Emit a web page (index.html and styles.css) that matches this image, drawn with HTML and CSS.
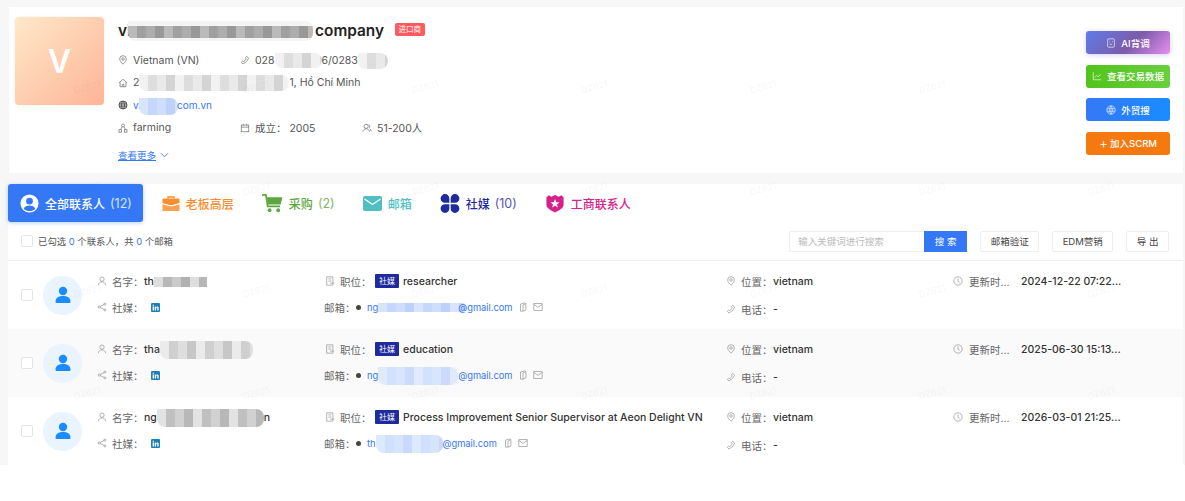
FILE: index.html
```html
<!DOCTYPE html>
<html lang="zh">
<head>
    <meta charset="UTF-8" />
    <meta name="viewport" content="width=device-width, initial-scale=1" />
    <title>公司详情</title>
    <link rel="stylesheet" href="styles.css">
</head>
<body>
    <svg class="sprite" xmlns="http://www.w3.org/2000/svg">
        <symbol id="i-pin" viewBox="0 0 12 12"><path d="M6 11C4 9 2 7 2 4.800A4 4 0 0 1 10 4.800C10 7 8 9 6 11Z"/><circle cx="6" cy="4.800" r="1.500"/></symbol>
        <symbol id="i-phone" viewBox="0 0 12 12"><path d="M8 1.500 10.500 4 9.500 5C8.500 7.500 7 9 4.500 10L3.500 10.800 1.500 8.800 3.200 7.300 4.500 7.800C5.800 7 6.800 6 7.300 4.700L6.700 3Z"/></symbol>
        <symbol id="i-home" viewBox="0 0 12 12"><path d="M1 6 6 1.500 11 6M2.500 5V10.500H9.500V5M5 10.500V7.500H7V10.500"/></symbol>
        <symbol id="i-globe" viewBox="0 0 12 12"><circle cx="6" cy="6" r="4.800"/><path d="M1.200 6H10.800M1.800 3.800H10.200M1.800 8.200H10.200M6 1.200C3.500 4 3.500 8 6 10.800M6 1.200C8.500 4 8.500 8 6 10.800"/></symbol>
        <symbol id="i-org" viewBox="0 0 12 12"><circle cx="6" cy="3" r="1.800"/><rect x="1.200" y="8" width="3" height="3"/><rect x="7.800" y="8" width="3" height="3"/><path d="M4.800 4.500 3 8M7.200 4.500 9 8"/></symbol>
        <symbol id="i-cal" viewBox="0 0 12 12"><rect x="1.500" y="2.500" width="9" height="8"/><path d="M1.500 5H10.500M4 1V3M8 1V3"/></symbol>
        <symbol id="i-users" viewBox="0 0 12 12"><circle cx="5" cy="4" r="2.500"/><path d="M1 10.500C1.500 8 3 7 5 7S8.500 8 9 10.500M8 1.800C9.500 2.500 9.700 5 8.500 6M9.500 7C10.500 7.700 11 8.700 11 10"/></symbol>
        <symbol id="i-user" viewBox="0 0 12 12"><circle cx="6" cy="3.800" r="2.600"/><path d="M1.500 11C2 8.300 3.800 7 6 7S10 8.300 10.500 11"/></symbol>
        <symbol id="i-share" viewBox="0 0 12 12"><circle cx="2.800" cy="6" r="1.400"/><circle cx="9.500" cy="2.500" r="1.200"/><circle cx="9.500" cy="9.500" r="1.200"/><path d="M4 5.300 8.400 3.100M4 6.700 8.400 8.900"/></symbol>
        <symbol id="i-job" viewBox="0 0 12 12"><path d="M2 1H9.500V11H2ZM4 3.500H7.500M4 6H7.500M6 8.500H11"/></symbol>
        <symbol id="i-clock" viewBox="0 0 12 12"><circle cx="6" cy="6" r="5"/><path d="M6 3V6.300L8 7.500"/></symbol>
        <symbol id="i-copy" viewBox="0 0 12 12"><path d="M3 2.500 8 1.200 9.500 2V9.500L6 11H3ZM6 11V3.500L9.500 2"/></symbol>
        <symbol id="i-mail" viewBox="0 0 12 12"><rect x="1" y="2" width="10" height="8"/><path d="M1 2.800 6 6.500 11 2.800"/></symbol>
        <symbol id="i-in" viewBox="0 0 12 12"><rect class="fill-in" width="12" height="12" rx="1.500"/><path class="fill-white" d="M2.200 4.700H4V10H2.200ZM2.200 2.200H4V3.800H2.200ZM5 4.700H6.700V5.400C7.200 4.700 8 4.500 8.700 4.600 9.700 4.800 10.200 5.500 10.200 6.700V10H8.400V7.200C8.400 6.400 8.100 6 7.600 6 7.100 6 6.800 6.400 6.800 7.200V10H5Z"/></symbol>
        <symbol id="i-person" viewBox="0 0 18 18"><circle cx="9" cy="5" r="4.200"/><path d="M1.500 15.500C1.500 11.500 5 10 9 10S16.500 11.500 16.500 15.500C16.500 16.500 16 17 15 17H3C2 17 1.500 16.500 1.500 15.500Z"/></symbol>
    </svg>

    <div class="page">
        <section class="company">
            <div class="logo">V</div>
            <div class="info">
                <div class="title-line">
                    <h1 class="title">vi<span class="mosaic mosaic-title"></span>company</h1>
                    <span class="tag-import">进口商</span>
                </div>
                <div class="info-row">
                    <span class="info-item wide"><svg class="ico"><use href="#i-pin"/></svg>Vietnam (VN)</span>
                    <span class="info-item"><svg class="ico"><use href="#i-phone"/></svg><span>028<span class="mosaic mosaic-phone"></span>6/0283<span class="mosaic mosaic-phone2"></span></span></span>
                </div>
                <div class="info-row">
                    <span class="info-item"><svg class="ico"><use href="#i-home"/></svg><span>2<span class="mosaic mosaic-addr"></span>1, Hồ Chí Minh</span></span>
                </div>
                <div class="info-row">
                    <span class="info-item"><svg class="ico ico-dark"><use href="#i-globe"/></svg><a class="site" href="#">vi<span class="mosaic mosaic-blue mosaic-site"></span>com.vn</a></span>
                </div>
                <div class="info-row">
                    <span class="info-item wide"><svg class="ico"><use href="#i-org"/></svg>farming</span>
                    <span class="info-item mid"><svg class="ico"><use href="#i-cal"/></svg>成立：&nbsp;2005</span>
                    <span class="info-item"><svg class="ico"><use href="#i-users"/></svg>51-200人</span>
                </div>
                <a class="more" href="#"><span>查看更多</span><svg class="chev" viewBox="0 0 10 6"><path d="M1 1 5 5 9 1"/></svg></a>
            </div>
            <div class="actions">
                <button class="action action-ai"><svg class="action-ico" viewBox="0 0 12 12"><rect x="2" y="1" width="8" height="10" rx="1"/><path d="M4 4.500H5M7 4.500H8M4.500 7.500H7.500"/></svg>AI背调</button>
                <button class="action action-data"><svg class="action-ico" viewBox="0 0 12 12"><path d="M1.500 1.500V10.500H11M3 8 5.500 5.500 7.500 7 10.500 4"/></svg>查看交易数据</button>
                <button class="action action-search"><svg class="action-ico" viewBox="0 0 12 12"><circle cx="6" cy="6" r="5"/><path d="M1.500 4.500H10.500M1.500 7.500H10.500M6 1C4 4 4 8 6 11M6 1C8 4 8 8 6 11"/></svg>外贸搜</button>
                <button class="action action-scrm"><span class="plus">+</span>加入SCRM</button>
            </div>
        </section>

        <section class="panel">
            <nav class="tabs">
                <a class="tab tab-active" href="#">
                    <svg class="tab-ico" viewBox="0 0 20 20"><circle cx="10" cy="10" r="9.500" fill="#fff"/><circle cx="10" cy="7.500" r="3.500" fill="#3578f6"/><path d="M3.800 15.500C5 12.800 7.300 12 10 12S15 12.800 16.200 15.500C14.500 17.300 12.400 18 10 18S5.500 17.300 3.800 15.500Z" fill="#3578f6"/></svg>
                    全部联系人 <span class="count">(12)</span>
                </a>
                <a class="tab tab-boss" href="#">
                    <svg class="tab-ico tab-ico-boss" viewBox="0 0 18 18"><path d="M6 4V2.500H12V4" fill="none" stroke="#f98d30" stroke-width="1.500"/><path d="M1.500 4H16.500Q17.500 4 17.500 5V8.500L10.500 10.500H7.500L.5 8.500V5Q.5 4 1.500 4Z" fill="#f98d30"/><path d="M.5 9.800 7.500 11.700H10.500L17.500 9.800V15.500Q17.500 16.500 16.500 16.500H1.500Q.5 16.500 .5 15.500Z" fill="#fba04f"/></svg>
                    老板高层
                </a>
                <a class="tab tab-buy" href="#">
                    <svg class="tab-ico tab-ico-cart" viewBox="0 0 22 20"><path d="M0 1H4L6 13H19" fill="none" stroke="#5ea63f" stroke-width="1.800"/><path d="M5 3.500H21.500L19.500 11H6.200Z" fill="#5ea63f"/><circle cx="8" cy="17" r="2" fill="#5ea63f"/><circle cx="17" cy="17" r="2" fill="#5ea63f"/></svg>
                    采购 <span class="count">(2)</span>
                </a>
                <a class="tab tab-mail" href="#">
                    <svg class="tab-ico" viewBox="0 0 19 15"><rect width="19" height="15" rx="2" fill="#4fbfc4"/><path d="M1.500 3 9.500 8.500 17.500 3" fill="none" stroke="#fff" stroke-width="1.300"/></svg>
                    邮箱
                </a>
                <a class="tab tab-social" href="#">
                    <svg class="tab-ico tab-ico-wide" viewBox="0 0 20 20"><g fill="#1f2b9c"><path d="M9.300 9.300H5A4.600 4.600 0 1 1 9.300 5Z"/><path d="M10.700 9.300H15A4.600 4.600 0 1 0 10.700 5Z"/><path d="M9.300 10.700H5A4.600 4.600 0 1 0 9.300 15Z"/><path d="M10.700 10.700H15A4.600 4.600 0 1 1 10.700 15Z"/></g></svg>
                    社媒 <span class="count">(10)</span>
                </a>
                <a class="tab tab-biz" href="#">
                    <svg class="tab-ico tab-ico-wide" viewBox="0 0 20 21"><path d="M3 1.500 6 3 10 1 14 3 17 1.500 19.500 4V12C19.500 16 14 18.500 10 20.500 6 18.500.5 16 .5 12V4Z" fill="#d6208a"/><path d="M10 5.500 11.400 9 15 9.200 12.200 11.500 13.200 15 10 13 6.800 15 7.800 11.500 5 9.200 8.600 9Z" fill="#fff"/></svg>
                    工商联系人
                </a>
            </nav>

            <div class="toolbar">
                <label class="check-all"><span class="checkbox"></span><span>已勾选 <em>0</em> 个联系人，共 <em>0</em> 个邮箱</span></label>
                <div class="tools">
                    <div class="search">
                        <input type="text" placeholder="输入关键词进行搜索">
                        <button class="search-btn">搜 索</button>
                    </div>
                    <button class="tool-btn">邮箱验证</button>
                    <button class="tool-btn">EDM营销</button>
                    <button class="tool-btn">导 出</button>
                </div>
            </div>

            <div class="contact">
                <span class="checkbox"></span>
                <span class="avatar"><svg><use href="#i-person"/></svg></span>
                <div class="col col-name">
                    <div class="line"><svg class="ico"><use href="#i-user"/></svg><span class="label">名字：</span><span class="value">th<span class="mosaic mosaic-name1"></span></span></div>
                    <div class="line"><svg class="ico"><use href="#i-share"/></svg><span class="label">社媒：</span><svg class="linkedin"><use href="#i-in"/></svg></div>
                </div>
                <div class="col col-job">
                    <div class="line"><svg class="ico"><use href="#i-job"/></svg><span class="label">职位：</span><span class="badge">社媒</span><span class="value">researcher</span></div>
                    <div class="line"><span class="label label-mail">邮箱：</span><span class="dot"></span><a class="mail" href="#">ng<span class="mosaic mosaic-blue mosaic-mail1"></span>@gmail.com</a><svg class="ico ico-copy"><use href="#i-copy"/></svg><svg class="ico"><use href="#i-mail"/></svg></div>
                </div>
                <div class="col">
                    <div class="line"><svg class="ico"><use href="#i-pin"/></svg><span class="label">位置：</span><span class="value">vietnam</span></div>
                    <div class="line"><svg class="ico"><use href="#i-phone"/></svg><span class="label">电话：</span><span class="value">-</span></div>
                </div>
                <div class="col">
                    <div class="line"><svg class="ico"><use href="#i-clock"/></svg><span class="label label-time">更新时...</span><span class="value value-time">2024-12-22 07:22...</span></div>
                </div>
            </div>

            <div class="contact contact-alt">
                <span class="checkbox"></span>
                <span class="avatar"><svg><use href="#i-person"/></svg></span>
                <div class="col col-name">
                    <div class="line"><svg class="ico"><use href="#i-user"/></svg><span class="label">名字：</span><span class="value">tha<span class="mosaic mosaic-name2"></span></span></div>
                    <div class="line"><svg class="ico"><use href="#i-share"/></svg><span class="label">社媒：</span><svg class="linkedin"><use href="#i-in"/></svg></div>
                </div>
                <div class="col col-job">
                    <div class="line"><svg class="ico"><use href="#i-job"/></svg><span class="label">职位：</span><span class="badge">社媒</span><span class="value">education</span></div>
                    <div class="line"><span class="label label-mail">邮箱：</span><span class="dot"></span><a class="mail" href="#">ng<span class="mosaic mosaic-blue mosaic-mail2"></span>@gmail.com</a><svg class="ico ico-copy"><use href="#i-copy"/></svg><svg class="ico"><use href="#i-mail"/></svg></div>
                </div>
                <div class="col">
                    <div class="line"><svg class="ico"><use href="#i-pin"/></svg><span class="label">位置：</span><span class="value">vietnam</span></div>
                    <div class="line"><svg class="ico"><use href="#i-phone"/></svg><span class="label">电话：</span><span class="value">-</span></div>
                </div>
                <div class="col">
                    <div class="line"><svg class="ico"><use href="#i-clock"/></svg><span class="label label-time">更新时...</span><span class="value value-time">2025-06-30 15:13...</span></div>
                </div>
            </div>

            <div class="contact">
                <span class="checkbox"></span>
                <span class="avatar"><svg><use href="#i-person"/></svg></span>
                <div class="col col-name">
                    <div class="line"><svg class="ico"><use href="#i-user"/></svg><span class="label">名字：</span><span class="value">ng<span class="mosaic mosaic-name3"></span>n</span></div>
                    <div class="line"><svg class="ico"><use href="#i-share"/></svg><span class="label">社媒：</span><svg class="linkedin"><use href="#i-in"/></svg></div>
                </div>
                <div class="col col-job">
                    <div class="line"><svg class="ico"><use href="#i-job"/></svg><span class="label">职位：</span><span class="badge">社媒</span><span class="value">Process Improvement Senior Supervisor at Aeon Delight VN</span></div>
                    <div class="line"><span class="label label-mail">邮箱：</span><span class="dot"></span><a class="mail" href="#">th<span class="mosaic mosaic-blue mosaic-mail3"></span>@gmail.com</a><svg class="ico ico-copy"><use href="#i-copy"/></svg><svg class="ico"><use href="#i-mail"/></svg></div>
                </div>
                <div class="col">
                    <div class="line"><svg class="ico"><use href="#i-pin"/></svg><span class="label">位置：</span><span class="value">vietnam</span></div>
                    <div class="line"><svg class="ico"><use href="#i-phone"/></svg><span class="label">电话：</span><span class="value">-</span></div>
                </div>
                <div class="col">
                    <div class="line"><svg class="ico"><use href="#i-clock"/></svg><span class="label label-time">更新时...</span><span class="value value-time">2026-03-01 21:25...</span></div>
                </div>
            </div>
        </section>

        <svg class="watermark" xmlns="http://www.w3.org/2000/svg">
            <defs>
                <pattern id="wm" x="4" y="39" width="169" height="102" patternUnits="userSpaceOnUse">
                    <text x="84" y="51" text-anchor="middle" transform="rotate(-15 84 51)">DZ621</text>
                </pattern>
            </defs>
            <rect width="100%" height="100%" fill="url(#wm)"/>
        </svg>
    </div>
</body>
</html>
```

FILE: styles.css
```css
* {
    box-sizing: border-box;
}
body {
    margin: 0;
    background: white;
    font-family: Inter, "Noto Sans CJK SC", sans-serif;
    font-size: 10.5px;
    color: #333;
}
a {
    text-decoration: none;
}
.sprite {
    display: none;
}
.page {
    position: relative;
    height: 465px;
    padding: 7px 2px 0 8px;
    background: #f7f7f7;
    overflow: hidden;
}
.watermark {
    position: absolute;
    left: 0;
    top: 0;
    width: 100%;
    height: 100%;
    pointer-events: none;
}
.watermark text {
    font-size: 9px;
    fill: rgba(0, 0, 0, 0.03);
}

/* icons */
.ico {
    width: 10px;
    height: 10px;
    flex: none;
    fill: none;
    stroke: #777;
    stroke-width: 0.9;
}
.ico-dark {
    stroke: #555;
    stroke-width: 1.2;
}

/* blurred parts of the screenshot */
.mosaic {
    display: inline-block;
    vertical-align: middle;
    margin: -6px 0;
    height: 16px;
    background-color: #e4e4e4;
    background-image: repeating-linear-gradient(90deg, rgba(255,255,255,0.5) 0 9px, rgba(0,0,0,0.03) 9px 18px, rgba(255,255,255,0.2) 18px 27px, rgba(0,0,0,0.07) 27px 36px);
    border-radius: 0 8px 8px 8px;
}
.mosaic-blue {
    background-color: #c5d8fb;
    background-image: repeating-linear-gradient(90deg, rgba(255,255,255,0.3) 0 9px, rgba(0,0,0,0) 9px 18px, rgba(255,255,255,0.15) 18px 27px, rgba(0,0,255,0.03) 27px 36px);
}
.mosaic-title {
    width: 185px;
    height: 20px;
    margin: -6px 2px -6px -3px;
    background-color: #a9a9a9;
    background-image: linear-gradient(#f4f4f4 0 25%, transparent 25% 85%, #f4f4f4 85%), repeating-linear-gradient(90deg, rgba(255,255,255,0.2) 0 9px, rgba(0,0,0,0.05) 9px 18px, rgba(255,255,255,0.05) 18px 27px, rgba(0,0,0,0.1) 27px 36px);
}
.mosaic-phone { width: 47px; height: 15px; }
.mosaic-phone2 { width: 30px; height: 16px; }
.mosaic-addr { width: 150px; height: 16px; }
.mosaic-site { width: 39px; height: 17px; margin-left: -2px; margin-right: -1px; }
.mosaic-name1 { width: 53px; height: 10px; background-color: #bdbdbd; border-radius: 0; }
.mosaic-name2 { width: 93px; height: 18px; background-color: #d6d6d6; }
.mosaic-name3 { width: 107px; height: 18px; background-color: #c6c6c6; }
.mosaic-mail1 { width: 88px; height: 9px; margin-right: -8px; border-radius: 0 4px 4px 0; }
.mosaic-mail2 { width: 80px; height: 18px; background-color: #d2e1fc; }
.mosaic-mail3 { width: 67px; height: 18px; background-color: #cfdffc; }

/* company card */
.company {
    display: flex;
    height: 166px;
    margin-left: 1px;
    padding: 10px 13px 0 6px;
    background: white;
}
.logo {
    width: 89px;
    height: 88px;
    margin-right: 14px;
    flex: none;
    display: flex;
    align-items: center;
    justify-content: center;
    border-radius: 4px;
    background: linear-gradient(135deg, #ffe8c9, #fdb497);
    box-shadow: 0 0 3px rgba(0, 0, 0, 0.08);
    color: white;
    font-size: 32px;
    font-weight: 600;
}
.info {
    flex: 1;
}
.title-line {
    display: flex;
    align-items: center;
    height: 26px;
    margin-bottom: 6px;
}
.title {
    margin: 0;
    font-size: 15.4px;
    font-weight: 600;
    color: #222;
}
.tag-import {
    margin: -2px 0 0 11px;
    padding: 0 3.5px;
    height: 13px;
    line-height: 13px;
    border-radius: 2px;
    background: #ff5a5f;
    color: white;
    font-size: 7.5px;
}
.info-row {
    display: flex;
    height: 22.5px;
    align-items: center;
    color: #555;
}
.info-item {
    display: flex;
    align-items: center;
    gap: 5px;
    white-space: nowrap;
}
.wide {
    width: 122px;
}
.mid {
    width: 122px;
}
.site,
.more {
    color: #3578f6;
}
.site {
    font-size: 10px;
}
.more {
    display: flex;
    align-items: center;
    gap: 4px;
    margin-top: 9px;
    font-size: 9.5px;
}
.more span {
    text-decoration: underline;
}
.chev {
    width: 9px;
    height: 6px;
    fill: none;
    stroke: #3578f6;
}
.actions {
    display: flex;
    flex-direction: column;
    gap: 10.5px;
    margin-top: 14px;
    width: 84px;
    flex: none;
}
.action {
    display: flex;
    align-items: center;
    justify-content: center;
    gap: 5px;
    height: 23px;
    padding: 0;
    border: none;
    border-radius: 3px;
    color: white;
    font-family: inherit;
    font-size: 9.5px;
    font-weight: 500;
    white-space: nowrap;
}
.action-ico {
    width: 10px;
    height: 10px;
    fill: none;
    stroke: rgba(255, 255, 255, 0.85);
    stroke-width: 0.9;
}
.action-ai {
    background: linear-gradient(135deg, #5f7ce8, #7d5ca9 55%, #e58ff2);
    box-shadow: 0 1px 5px rgba(110, 100, 220, 0.3);
}
.action-data {
    background: linear-gradient(90deg, #52c41a, #69cf3f);
}
.action-search {
    background: linear-gradient(90deg, #3578f6, #1a8cff);
}
.action-scrm {
    background: #f5790f;
    gap: 2px;
}
.plus {
    font-size: 14px;
    font-weight: 300;
    line-height: 1;
}

/* tabs */
.panel {
    margin-top: 11px;
    background: white;
}
.tabs {
    display: flex;
    align-items: center;
    gap: 28px;
    height: 38px;
}
.tab {
    display: flex;
    align-items: center;
    gap: 6px;
    height: 38px;
    font-size: 12px;
    font-weight: 500;
    white-space: nowrap;
}
.tab-ico {
    width: 19px;
    height: 19px;
    flex: none;
}
.tab-ico-boss {
    width: 18px;
}
.tab-ico-cart {
    width: 21px;
}
.tab-ico-wide {
    width: 20px;
}
.count {
    margin-left: -1px;
    font-size: 12.5px;
    font-weight: 400;
    opacity: 0.8;
}
.tab-active {
    margin-right: -9px;
    padding: 0 11px 0 12px;
    border-radius: 3px;
    background: #3578f6;
    box-shadow: 0 1px 4px rgba(53, 120, 246, 0.35);
    color: white;
}
.tab-boss { color: #fb8c2d; }
.tab-buy { color: #5ea63f; }
.tab-mail { color: #4fbfc4; }
.tab-social { color: #1f2b9c; }
.tab-biz { color: #d6208a; }

/* toolbar */
.toolbar {
    display: flex;
    align-items: center;
    justify-content: space-between;
    height: 39px;
    padding: 0 14px 0 13px;
    border-bottom: 1px solid #f0f0f0;
}
.checkbox {
    display: block;
    width: 12px;
    height: 12px;
    flex: none;
    border: 1px solid #e4e4e4;
    border-radius: 2px;
    background: white;
}
.check-all {
    display: flex;
    align-items: center;
    gap: 5px;
    font-size: 9.4px;
    color: #555;
}
.check-all em {
    font-style: normal;
    color: #3578f6;
}
.tools {
    display: flex;
    gap: 13px;
}
.search {
    display: flex;
    width: 178px;
}
.search input {
    flex: 1;
    min-width: 0;
    height: 21px;
    padding: 0 8px;
    border: 1px solid #eee;
    border-right: none;
    border-radius: 2px 0 0 2px;
    font-family: inherit;
    font-size: 9.5px;
    outline: none;
}
.search input::placeholder {
    color: #bbb;
}
.search-btn {
    width: 43px;
    height: 21px;
    padding: 0;
    border: none;
    background: #3578f6;
    color: white;
    font-family: inherit;
    font-size: 9.5px;
}
.tool-btn {
    height: 21px;
    padding: 0 9.5px;
    border: 1px solid #eee;
    border-radius: 2px;
    background: white;
    color: #444;
    font-family: inherit;
    font-size: 9.5px;
}

/* contact rows */
.contact {
    display: grid;
    grid-template-columns: 22px 54px 228px 401px 227px 1fr;
    align-items: center;
    height: 68px;
    padding-left: 13px;
    background: white;
}
.contact-alt {
    background: #fafafa;
}
.avatar {
    display: flex;
    align-items: center;
    justify-content: center;
    width: 39px;
    height: 39px;
    border-radius: 50%;
    background: #e9f4ff;
}
.avatar svg {
    width: 18px;
    height: 18px;
    fill: #1a8cff;
}
.col {
    display: flex;
    flex-direction: column;
    gap: 8px;
    align-self: start;
    padding-top: 10px;
}
.col-name {
    gap: 6px;
}
.col-job {
    gap: 6px;
}
.line {
    display: flex;
    align-items: center;
    gap: 5px;
    height: 20px;
    white-space: nowrap;
}
.line .ico {
    stroke: #999;
}
.label {
    width: 27px;
    color: #666;
    font-size: 10.5px;
}
.label-mail {
    margin-left: -1px;
}
.label-time {
    width: 47px;
    margin-left: 1px;
}
.value {
    color: #333;
    font-weight: 500;
}
.linkedin {
    width: 9px;
    height: 9px;
    margin-left: 7px;
}
.fill-in {
    fill: #1c7fb8;
}
.fill-white {
    fill: white;
}
.badge {
    margin: 0 -1px 0 3px;
    padding: 0 4px;
    height: 14px;
    line-height: 14px;
    border-radius: 1px;
    background: #1f2b9c;
    color: white;
    font-size: 8px;
}
.dot {
    width: 5px;
    height: 5px;
    border-radius: 50%;
    background: #444;
}
.mail {
    margin-left: 1px;
    color: #3578f6;
    font-size: 9.3px;
}
.ico-copy {
    margin-left: 1px;
}
```
